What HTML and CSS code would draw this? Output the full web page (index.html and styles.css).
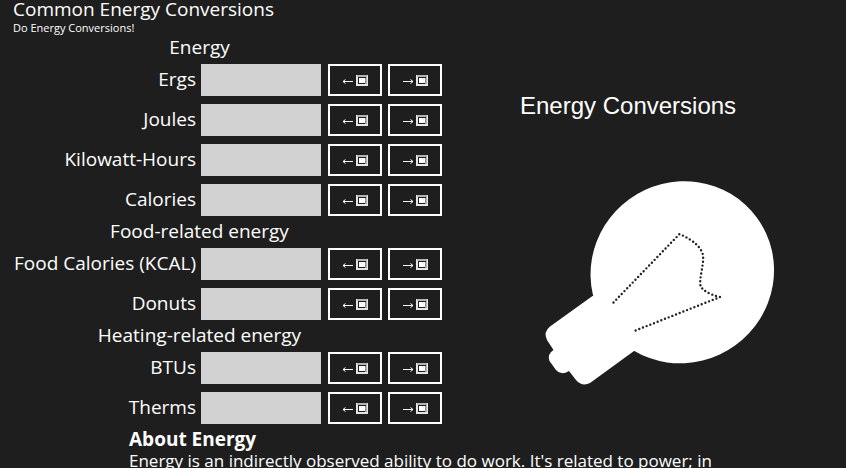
FILE: index.html
```html
<!DOCTYPE html>
<html lang="en">
<head>
<meta charset="utf-8">
<title>Common Energy Conversions</title>
<link rel="stylesheet" href="styles.css">
</head>
<body>
<svg class="defs" aria-hidden="true">
  <symbol id="box" viewBox="0 0 12 11">
    <path fill="#e6e6e6" d="M0 0h12v11H0z"/>
    <path fill="#b4b4b4" d="M1 0h10v2H1zM10 2h1v7h-1z"/>
    <path fill="#1e1e1e" d="M2 2h8v7H2z"/>
    <path fill="#8c8c8c" d="M3 3h7v1H3zM9 3h1v6H9z"/>
    <path fill="#fff" d="M3 3h6v5H3z"/>
  </symbol>
  <symbol id="in" viewBox="0 0 26 12">
    <path d="M1 7.500H11M3.500 5.500L1 7.500L3.500 9.500" fill="none" stroke="#fff"/>
    <use href="#box" x="14" y="1" width="12" height="11"/>
  </symbol>
  <symbol id="out" viewBox="0 0 26 12">
    <path d="M1 7.500H11M8.500 5.500L11 7.500L8.500 9.500" fill="none" stroke="#fff"/>
    <use href="#box" x="14" y="1" width="12" height="11"/>
  </symbol>
</svg>
<header>
  <h1>Common Energy Conversions</h1>
  <p class="subtitle">Do Energy Conversions!</p>
</header>
<main>
  <div class="top">
    <form class="converter">
      <h2>Energy</h2>
      <label for="ergs">Ergs</label><input id="ergs" type="text">
      <button type="button" aria-label="Paste Ergs"><svg><use href="#in"/></svg></button>
      <button type="button" aria-label="Copy Ergs"><svg><use href="#out"/></svg></button>
      <label for="joules">Joules</label><input id="joules" type="text">
      <button type="button" aria-label="Paste Joules"><svg><use href="#in"/></svg></button>
      <button type="button" aria-label="Copy Joules"><svg><use href="#out"/></svg></button>
      <label for="kwh">Kilowatt-Hours</label><input id="kwh" type="text">
      <button type="button" aria-label="Paste Kilowatt-Hours"><svg><use href="#in"/></svg></button>
      <button type="button" aria-label="Copy Kilowatt-Hours"><svg><use href="#out"/></svg></button>
      <label for="calories">Calories</label><input id="calories" type="text">
      <button type="button" aria-label="Paste Calories"><svg><use href="#in"/></svg></button>
      <button type="button" aria-label="Copy Calories"><svg><use href="#out"/></svg></button>
      <h2>Food-related energy</h2>
      <label for="kcal">Food Calories (KCAL)</label><input id="kcal" type="text">
      <button type="button" aria-label="Paste Food Calories"><svg><use href="#in"/></svg></button>
      <button type="button" aria-label="Copy Food Calories"><svg><use href="#out"/></svg></button>
      <label for="donuts">Donuts</label><input id="donuts" type="text">
      <button type="button" aria-label="Paste Donuts"><svg><use href="#in"/></svg></button>
      <button type="button" aria-label="Copy Donuts"><svg><use href="#out"/></svg></button>
      <h2>Heating-related energy</h2>
      <label for="btus">BTUs</label><input id="btus" type="text">
      <button type="button" aria-label="Paste BTUs"><svg><use href="#in"/></svg></button>
      <button type="button" aria-label="Copy BTUs"><svg><use href="#out"/></svg></button>
      <label for="therms">Therms</label><input id="therms" type="text">
      <button type="button" aria-label="Paste Therms"><svg><use href="#in"/></svg></button>
      <button type="button" aria-label="Copy Therms"><svg><use href="#out"/></svg></button>
    </form>
    <section class="picture">
      <h2>Energy Conversions</h2>
      <svg class="bulb" viewBox="540 176 240 214" role="img" aria-label="Light bulb">
        <g fill="#fff">
          <ellipse cx="682.300" cy="272.300" rx="92.500" ry="90.300" transform="rotate(-36 682.300 272.300)"/>
          <path d="M592.500 296L550 326.500Q543 332 547 340L553.500 350Q547 354 549.500 361L556 370Q561 376 569 371L576 380Q582 387 590 383L634 351L660 300Z"/>
        </g>
        <path d="M613.500 302.500L679.500 234Q700 243 703 255C704 266 699 277 700.500 286Q704 293 720 297L633 331.500" fill="none" stroke="#222" stroke-width="2.400" stroke-linecap="round" stroke-dasharray="0 3.950"/>
      </svg>
    </section>
  </div>
  <section class="about">
    <h2>About Energy</h2>
    <p>Energy is an indirectly observed ability to do work. It's related to power; in</p>
  </section>
</main>
</body>
</html>
```
FILE: styles.css
```css
* {
  box-sizing: border-box;
}

body {
  margin: 0;
  padding: 0 13px;
  background: #1e1e1e;
  color: #fff;
  font-family: "Segoe UI", "Open Sans", "Noto Sans", sans-serif;
  font-size: 19px;
  line-height: 24px;
}

h1,
h2,
p {
  margin: 0;
  font-size: inherit;
  font-weight: 400;
}

.defs {
  display: none;
}

h1 {
  line-height: 18px;
}

.subtitle {
  padding-top: 2px;
  font-size: 11px;
  line-height: 16px;
}

.top {
  display: flex;
  gap: 78px;
}

.converter {
  display: grid;
  grid-template-columns: 188px 127px 60px 54px;
  align-items: center;
}

.converter h2 {
  grid-column: 1 / 4;
  padding: 0 2px 2px 0;
  line-height: 22px;
  text-align: center;
}

.converter label {
  grid-column: 1;
  padding: 0 5px 2px 0;
  line-height: 30px;
  text-align: right;
  white-space: nowrap;
}

.converter input {
  width: 120px;
  height: 32px;
  margin: 4px 0;
  padding: 0 6px;
  border: 0;
  background: #d2d2d2;
  font: inherit;
}

.converter button {
  display: flex;
  align-items: center;
  justify-content: center;
  width: 54px;
  height: 32px;
  padding: 0;
  border: 2px solid #fff;
  background: none;
}

.converter button svg {
  width: 26px;
  height: 12px;
}

.picture {
  flex: 1;
  padding-top: 56px;
}

.picture h2 {
  font-family: Arial, "Liberation Sans", sans-serif;
  font-size: 24px;
  line-height: 28px;
}

.bulb {
  display: block;
  width: 240px;
  margin: 56px 0 0 20px;
}

.about {
  padding-left: 116px;
  line-height: 22px;
}

.about h2 {
  font-weight: 700;
}

.about p {
  font-size: 17px;
}
```
